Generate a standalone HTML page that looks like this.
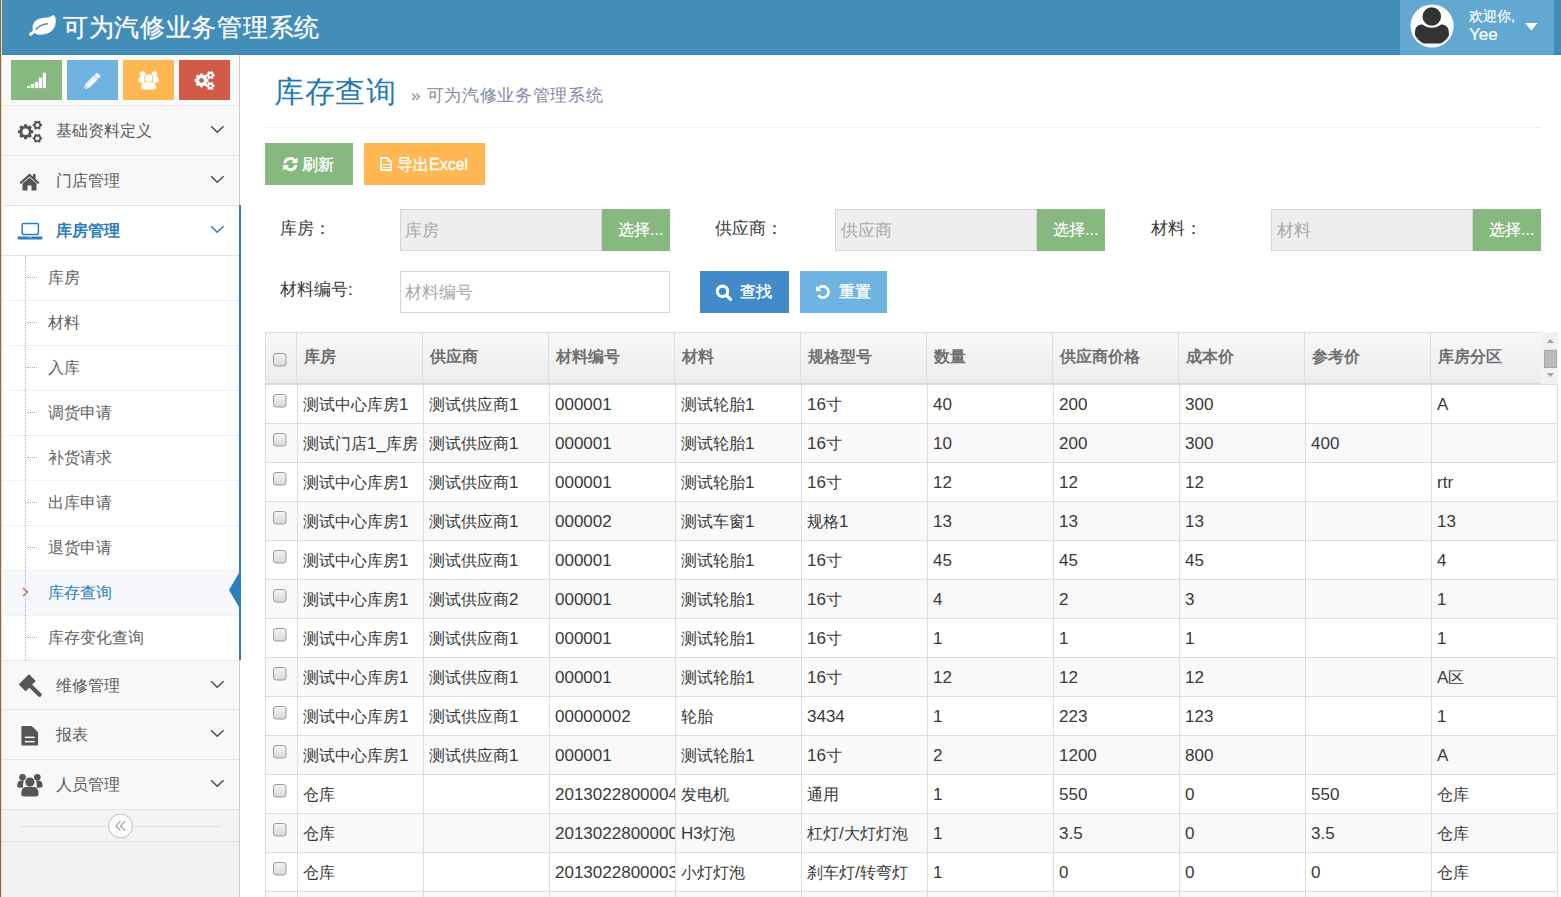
<!DOCTYPE html><html><head><meta charset="utf-8"><title>库存查询</title><style>
*{box-sizing:border-box;margin:0;padding:0}
html,body{width:1561px;height:897px;overflow:hidden;background:#fff;font-family:"Liberation Sans",sans-serif;color:#393939}
div,span,svg{position:absolute}
.nw{white-space:nowrap}
i{font-style:normal;position:static}
</style></head><body>
<div style="left:0px;top:0px;width:1px;height:897px;background:#8e6a35"></div>
<div style="left:1px;top:0px;width:1px;height:897px;background:#e0dcd5"></div>
<div style="left:2px;top:0px;width:1559px;height:54px;background:#438eb9"></div>
<div style="left:2px;top:54px;width:1559px;height:1px;background:#3783b5"></div>
<svg style="left:25px;top:10px" width="36" height="30" viewBox="0 0 36 30"><path d="M8 20.5 C6.2 14.5 10 8.2 19.5 7.8 C23.5 7.6 26 6.6 28.4 5 C31.2 6.2 31.2 12 30.2 15.5 C28.5 21.5 22 25 14.5 24.7 C12 24.6 10.5 23.8 9.3 23 L7 25.3 C6 26.3 4.2 26 4 24.6 C3.8 23.4 4.8 22.7 6.2 21.9 Z" fill="#fff"/><path d="M10.7 19.6 C13.5 16.4 17 13.9 22.8 13.7" stroke="#438eb9" stroke-width="1.5" fill="none"/></svg>
<span class="nw" style="left:63px;top:11px;font-size:25px;line-height:32px;color:#fff;letter-spacing:0.7px;-webkit-text-stroke:0.3px #fff">可为汽修业务管理系统</span>
<div style="left:1400px;top:0px;width:154px;height:54px;background:#62a8d1"></div>
<div style="left:1400px;top:54px;width:154px;height:1px;background:#55a0cd"></div>
<svg style="left:1406px;top:0px" width="52" height="52" viewBox="0 0 52 52"><circle cx="26.1" cy="26" r="21.6" fill="#fff"/><circle cx="26.1" cy="26" r="19.9" fill="none" stroke="#dde9f2" stroke-width="0.7"/><clipPath id="cc"><circle cx="26.1" cy="26" r="19.4"/></clipPath><g clip-path="url(#cc)"><path d="M9 43.5 L9 33 C9 27 12 24.6 16.5 24.6 C19.5 27 22.5 27.8 25.8 27.8 C29 27.8 32 27 35 24.6 C39.5 24.6 42.9 27 42.9 33 L42.9 43.5 Z" fill="#333"/></g><circle cx="25.8" cy="16.5" r="10.4" fill="#fff"/><circle cx="25.8" cy="16.5" r="9.3" fill="#333"/></svg>
<span class="nw" style="left:1469px;top:8px;font-size:14px;line-height:16px;color:#fff;-webkit-text-stroke:0.2px #fff">欢迎你,</span>
<span class="nw" style="left:1469px;top:25px;font-size:17px;line-height:20px;color:#fff;-webkit-text-stroke:0.2px #fff">Yee</span>
<svg style="left:1525px;top:23px" width="13" height="8" viewBox="0 0 13 8"><path d="M0 0 L12.5 0 L6.25 7.5 Z" fill="#fff"/></svg>
<div style="left:2px;top:55px;width:238px;height:842px;background:#f2f2f2;border-right:1px solid #ccc"></div>
<div style="left:2px;top:55px;width:237px;height:50px;background:#fafafa;border-top:1px solid #fff"></div>
<div style="left:11px;top:60px;width:51px;height:40px;background:#87b87f"></div>
<div style="left:67px;top:60px;width:51px;height:40px;background:#6fb3e0"></div>
<div style="left:123px;top:60px;width:51px;height:40px;background:#ffb752"></div>
<div style="left:179px;top:60px;width:51px;height:40px;background:#d15b47"></div>
<svg style="left:22px;top:66px" width="30" height="28" viewBox="0 0 30 28"><g fill="#fff"><rect x="4.95" y="19.9" width="3.2" height="2.2"/><rect x="8.9" y="18" width="3.2" height="4.1"/><rect x="12.9" y="15.9" width="3.2" height="6.2"/><rect x="16.75" y="11.6" width="3.2" height="10.5"/><rect x="20.75" y="6.7" width="3.2" height="15.4"/></g></svg>
<svg style="left:80px;top:68px" width="24" height="24" viewBox="0 0 24 24"><g transform="translate(11.9,13.3) rotate(-45) scale(0.94)"><rect x="6.3" y="-2.9" width="4.2" height="5.8" rx="1.2" fill="#fff"/><path d="M-6.2 -2.9 L5.5 -2.9 L5.5 2.9 L-6.2 2.9 L-10.2 1.2 L-10.2 -1.2 Z" fill="#fff"/><path d="M-6.5 -1.2 L5 -1.2" stroke="#6fb3e0" stroke-width="0.6"/><circle cx="-8.3" cy="0" r="0.9" fill="#6fb3e0"/></g></svg>
<svg style="left:132px;top:66px" width="30" height="28" viewBox="0 0 30 28"><g fill="#fff"><circle cx="10.7" cy="8.1" r="2.9"/><circle cx="22.5" cy="8.1" r="2.9"/><circle cx="9.6" cy="13.6" r="3.1"/><circle cx="23.6" cy="13.6" r="3.1"/><path d="M6.5 13.6 L12 12 L12 16.5 L6.5 15.5 Z"/><path d="M26.7 13.6 L21 12 L21 16.5 L26.7 15.5 Z"/></g><circle cx="16.6" cy="12.1" r="4.6" fill="#ffb752"/><g fill="#fff"><circle cx="16.6" cy="12.1" r="3.9"/><path d="M9.4 21.5 C9.2 17.5 11 16.3 13.5 16.3 L19.7 16.3 C22.2 16.3 24 17.5 23.8 21.5 C23.7 23 23 23.6 21.5 23.6 L11.7 23.6 C10.2 23.6 9.5 23 9.4 21.5 Z"/></g></svg>
<svg style="left:186px;top:66px" width="34" height="28" viewBox="0 0 34 28"><polygon points="20.75,12.89 22.36,13.01 22.36,15.79 20.75,15.91 20.28,17.04 21.33,18.27 19.37,20.23 18.14,19.18 17.01,19.65 16.89,21.26 14.11,21.26 13.99,19.65 12.86,19.18 11.63,20.23 9.67,18.27 10.72,17.04 10.25,15.91 8.64,15.79 8.64,13.01 10.25,12.89 10.72,11.76 9.67,10.53 11.63,8.57 12.86,9.62 13.99,9.15 14.11,7.54 16.89,7.54 17.01,9.15 18.14,9.62 19.37,8.57 21.33,10.53 20.28,11.76" fill="#fff"/><circle cx="15.5" cy="14.4" r="5.46" fill="#fff"/><circle cx="15.5" cy="14.4" r="2.4" fill="#d15b47"/><polygon points="27.30,8.11 28.56,8.09 28.56,10.31 27.30,10.29 26.79,11.16 27.44,12.25 25.52,13.35 24.90,12.25 23.90,12.25 23.28,13.35 21.36,12.25 22.01,11.16 21.50,10.29 20.24,10.31 20.24,8.09 21.50,8.11 22.01,7.24 21.36,6.15 23.28,5.05 23.90,6.15 24.90,6.15 25.52,5.05 27.44,6.15 26.79,7.24" fill="#fff"/><circle cx="24.4" cy="9.2" r="3.10" fill="#fff"/><circle cx="24.4" cy="9.2" r="1.2" fill="#d15b47"/><polygon points="27.30,18.81 28.56,18.79 28.56,21.01 27.30,20.99 26.79,21.86 27.44,22.95 25.52,24.05 24.90,22.95 23.90,22.95 23.28,24.05 21.36,22.95 22.01,21.86 21.50,20.99 20.24,21.01 20.24,18.79 21.50,18.81 22.01,17.94 21.36,16.85 23.28,15.75 23.90,16.85 24.90,16.85 25.52,15.75 27.44,16.85 26.79,17.94" fill="#fff"/><circle cx="24.4" cy="19.9" r="3.10" fill="#fff"/><circle cx="24.4" cy="19.9" r="1.2" fill="#d15b47"/></svg>
<div style="left:2px;top:105px;width:237px;height:50px;background:#f8f8f8;border-top:1px solid #e5e5e5"></div>
<span class="nw" style="left:56px;top:120.5px;font-size:16px;line-height:20px;color:#585858;">基础资料定义</span>
<svg style="left:210px;top:125px" width="15" height="9" viewBox="0 0 15 9"><path d="M1.2 1.2 L7.2 7.2 L13.6 1.2" stroke="#4a4a4a" stroke-width="1.5" fill="none"/></svg>
<div style="left:2px;top:155px;width:237px;height:50px;background:#f8f8f8;border-top:1px solid #e5e5e5"></div>
<span class="nw" style="left:56px;top:170.5px;font-size:16px;line-height:20px;color:#585858;">门店管理</span>
<svg style="left:210px;top:175px" width="15" height="9" viewBox="0 0 15 9"><path d="M1.2 1.2 L7.2 7.2 L13.6 1.2" stroke="#4a4a4a" stroke-width="1.5" fill="none"/></svg>
<svg style="left:14px;top:116px" width="32" height="32" viewBox="0 0 32 32"><polygon points="17.31,14.12 19.16,14.25 19.16,17.15 17.31,17.28 16.76,18.62 17.98,20.02 15.92,22.08 14.52,20.86 13.18,21.41 13.05,23.26 10.15,23.26 10.02,21.41 8.68,20.86 7.28,22.08 5.22,20.02 6.44,18.62 5.89,17.28 4.04,17.15 4.04,14.25 5.89,14.12 6.44,12.78 5.22,11.38 7.28,9.32 8.68,10.54 10.02,9.99 10.15,8.14 13.05,8.14 13.18,9.99 14.52,10.54 15.92,9.32 17.98,11.38 16.76,12.78" fill="#555"/><circle cx="11.6" cy="15.7" r="5.93" fill="#555"/><circle cx="11.6" cy="15.7" r="3.2" fill="#f8f8f8"/><polygon points="26.77,7.98 28.09,8.10 28.09,10.10 26.77,10.22 26.05,11.46 26.61,12.67 24.88,13.67 24.12,12.58 22.68,12.58 21.92,13.67 20.19,12.67 20.75,11.46 20.03,10.22 18.71,10.10 18.71,8.10 20.03,7.98 20.75,6.74 20.19,5.53 21.92,4.53 22.68,5.62 24.12,5.62 24.88,4.53 26.61,5.53 26.05,6.74" fill="#555"/><circle cx="23.4" cy="9.1" r="3.55" fill="#555"/><circle cx="23.4" cy="9.1" r="1.9" fill="#f8f8f8"/><polygon points="26.77,21.18 28.09,21.30 28.09,23.30 26.77,23.42 26.05,24.66 26.61,25.87 24.88,26.87 24.12,25.78 22.68,25.78 21.92,26.87 20.19,25.87 20.75,24.66 20.03,23.42 18.71,23.30 18.71,21.30 20.03,21.18 20.75,19.94 20.19,18.73 21.92,17.73 22.68,18.82 24.12,18.82 24.88,17.73 26.61,18.73 26.05,19.94" fill="#555"/><circle cx="23.4" cy="22.3" r="3.55" fill="#555"/><circle cx="23.4" cy="22.3" r="1.9" fill="#f8f8f8"/></svg>
<svg style="left:19px;top:173px" width="21" height="18" viewBox="0 0 21 18"><path d="M10.5 0.5 L0.5 9.5 L2 11 L10.5 3.5 L19 11 L20.5 9.5 L16.5 6 L16.5 1 L14 1 L14 3.8 Z" fill="#555"/><path d="M3.5 10.5 L10.5 4.5 L17.5 10.5 L17.5 17.5 L12.5 17.5 L12.5 12.5 L8.5 12.5 L8.5 17.5 L3.5 17.5 Z" fill="#555"/></svg>
<div style="left:2px;top:205px;width:237px;height:50px;background:#fff;border-top:1px solid #e5e5e5"></div>
<span class="nw" style="left:56px;top:220.5px;font-size:16px;line-height:20px;color:#2b7dbc;font-weight:bold">库房管理</span>
<svg style="left:12px;top:212px" width="36" height="32" viewBox="0 0 36 32"><rect x="10.2" y="11.5" width="16.2" height="11" rx="1.2" fill="none" stroke="#2b7dbc" stroke-width="1.5"/><path d="M5.8 24.6 L30.4 24.6 L30.4 26.2 Q30.4 27.4 29.2 27.4 L7 27.4 Q5.8 27.4 5.8 26.2 Z" fill="#2b7dbc"/><rect x="16.5" y="24.6" width="3.5" height="0.8" fill="#cfe0ee"/></svg>
<svg style="left:210px;top:225px" width="15" height="9" viewBox="0 0 15 9"><path d="M1.2 1.2 L7.2 7.2 L13.6 1.2" stroke="#2b7dbc" stroke-width="1.5" fill="none"/></svg>
<div style="left:239px;top:205px;width:2px;height:455px;background:#2b7dbc"></div>
<div style="left:2px;top:255px;width:237px;height:405px;background:#fff;border-top:1px solid #e5e5e5"></div>
<span class="nw" style="left:48px;top:268px;font-size:16px;line-height:20px;color:#616161;">库房</span>
<div style="left:27px;top:277px;width:10px;height:0;border-top:1px dotted #8fb5d6"></div>
<div style="left:2px;top:300px;width:237px;height:0;border-top:1px dotted #e4e4e4"></div>
<span class="nw" style="left:48px;top:313px;font-size:16px;line-height:20px;color:#616161;">材料</span>
<div style="left:27px;top:322px;width:10px;height:0;border-top:1px dotted #8fb5d6"></div>
<div style="left:2px;top:345px;width:237px;height:0;border-top:1px dotted #e4e4e4"></div>
<span class="nw" style="left:48px;top:358px;font-size:16px;line-height:20px;color:#616161;">入库</span>
<div style="left:27px;top:367px;width:10px;height:0;border-top:1px dotted #8fb5d6"></div>
<div style="left:2px;top:390px;width:237px;height:0;border-top:1px dotted #e4e4e4"></div>
<span class="nw" style="left:48px;top:403px;font-size:16px;line-height:20px;color:#616161;">调货申请</span>
<div style="left:27px;top:412px;width:10px;height:0;border-top:1px dotted #8fb5d6"></div>
<div style="left:2px;top:435px;width:237px;height:0;border-top:1px dotted #e4e4e4"></div>
<span class="nw" style="left:48px;top:448px;font-size:16px;line-height:20px;color:#616161;">补货请求</span>
<div style="left:27px;top:457px;width:10px;height:0;border-top:1px dotted #8fb5d6"></div>
<div style="left:2px;top:480px;width:237px;height:0;border-top:1px dotted #e4e4e4"></div>
<span class="nw" style="left:48px;top:493px;font-size:16px;line-height:20px;color:#616161;">出库申请</span>
<div style="left:27px;top:502px;width:10px;height:0;border-top:1px dotted #8fb5d6"></div>
<div style="left:2px;top:525px;width:237px;height:0;border-top:1px dotted #e4e4e4"></div>
<span class="nw" style="left:48px;top:538px;font-size:16px;line-height:20px;color:#616161;">退货申请</span>
<div style="left:27px;top:547px;width:10px;height:0;border-top:1px dotted #8fb5d6"></div>
<div style="left:2px;top:570px;width:237px;height:0;border-top:1px dotted #e4e4e4"></div>
<div style="left:2px;top:571px;width:237px;height:44px;background:#f5f7fa"></div>
<span class="nw" style="left:48px;top:583px;font-size:16px;line-height:20px;color:#2b7dbc;">库存查询</span>
<svg style="left:22px;top:587px" width="7" height="10" viewBox="0 0 7 10"><path d="M1 1 L5.5 5 L1 9" stroke="#c86139" stroke-width="1.4" fill="none"/></svg>
<svg style="left:229px;top:573px" width="10" height="34" viewBox="0 0 10 34"><path d="M10 0 L0 17 L10 34 Z" fill="#2b7dbc"/></svg>
<div style="left:2px;top:615px;width:237px;height:0;border-top:1px dotted #e4e4e4"></div>
<span class="nw" style="left:48px;top:628px;font-size:16px;line-height:20px;color:#616161;">库存变化查询</span>
<div style="left:27px;top:637px;width:10px;height:0;border-top:1px dotted #8fb5d6"></div>
<div style="left:25px;top:256px;width:0;height:404px;border-left:1px dotted #8fb5d6"></div>
<div style="left:2px;top:660px;width:237px;height:50px;background:#f8f8f8;border-top:1px solid #e5e5e5"></div>
<span class="nw" style="left:56px;top:675.5px;font-size:16px;line-height:20px;color:#585858;">维修管理</span>
<svg style="left:210px;top:680px" width="15" height="9" viewBox="0 0 15 9"><path d="M1.2 1.2 L7.2 7.2 L13.6 1.2" stroke="#4a4a4a" stroke-width="1.5" fill="none"/></svg>
<div style="left:2px;top:709px;width:237px;height:50px;background:#f8f8f8;border-top:1px solid #e5e5e5"></div>
<span class="nw" style="left:56px;top:724.5px;font-size:16px;line-height:20px;color:#585858;">报表</span>
<svg style="left:210px;top:729px" width="15" height="9" viewBox="0 0 15 9"><path d="M1.2 1.2 L7.2 7.2 L13.6 1.2" stroke="#4a4a4a" stroke-width="1.5" fill="none"/></svg>
<div style="left:2px;top:759px;width:237px;height:50px;background:#f8f8f8;border-top:1px solid #e5e5e5"></div>
<span class="nw" style="left:56px;top:774.5px;font-size:16px;line-height:20px;color:#585858;">人员管理</span>
<svg style="left:210px;top:779px" width="15" height="9" viewBox="0 0 15 9"><path d="M1.2 1.2 L7.2 7.2 L13.6 1.2" stroke="#4a4a4a" stroke-width="1.5" fill="none"/></svg>
<svg style="left:10px;top:665px" width="40" height="40" viewBox="0 0 40 40"><g fill="#555"><path d="M9.3 18.8 L18.4 9.7 Q19 9.1 19.6 9.7 L25.3 15.4 Q25.9 16 25.3 16.6 L16.2 25.7 Q15.6 26.3 15 25.7 L9.3 20 Q8.7 19.4 9.3 18.8 Z"/></g><path d="M20.8 21.2 L29.6 29.8" stroke="#555" stroke-width="4.2" stroke-linecap="round"/><path d="M11.5 17 L17.5 23" stroke="#f8f8f8" stroke-width="0"/></svg>
<svg style="left:10px;top:715px" width="40" height="40" viewBox="0 0 40 40"><path d="M12.4 11 L21.6 11 L28.1 17.4 L28.1 29.5 Q28.1 30.5 27.1 30.5 L12.4 30.5 Q11.4 30.5 11.4 29.5 L11.4 12 Q11.4 11 12.4 11 Z" fill="#555"/><path d="M21.9 11 L28.1 17.2 L28.1 11 Z" fill="#f8f8f8"/><path d="M22.6 11.8 L27.3 16.5 L22.6 16.5 Z" fill="#555"/><rect x="14.8" y="21.6" width="9.9" height="1.5" fill="#f8f8f8"/><rect x="14.8" y="25.9" width="9.9" height="1.5" fill="#f8f8f8"/></svg>
<svg style="left:10px;top:765px" width="40" height="40" viewBox="0 0 40 40"><g fill="#555"><circle cx="12.5" cy="12.2" r="3.3"/><circle cx="27.3" cy="12.2" r="3.3"/><path d="M7.2 22 Q7 15.6 11 15.6 L14 15.6 Q12.5 18 13 22.5 Q10 23 7.2 22 Z"/><path d="M32.6 22 Q32.8 15.6 28.8 15.6 L25.8 15.6 Q27.3 18 26.8 22.5 Q29.8 23 32.6 22 Z"/></g><circle cx="19.9" cy="17.1" r="5.3" fill="#f8f8f8"/><g fill="#555"><circle cx="19.9" cy="17.1" r="4.6"/><path d="M11.3 29.3 C11.1 23.5 13.5 21.9 16.5 21.9 L23.3 21.9 C26.3 21.9 28.7 23.5 28.5 29.3 C28.4 30.8 27.6 31.4 26 31.4 L13.8 31.4 C12.2 31.4 11.4 30.8 11.3 29.3 Z"/></g></svg>
<div style="left:2px;top:809px;width:237px;height:33px;background:#f3f3f3;border-top:1px solid #e5e5e5;border-bottom:1px solid #e0e0e0"></div>
<div style="left:21px;top:826px;width:199px;height:1px;background:#e0e0e0"></div>
<svg style="left:108px;top:814px" width="25" height="25" viewBox="0 0 25 25"><circle cx="12.5" cy="11.9" r="11.9" fill="#fff" stroke="#bbb" stroke-width="1"/><path d="M12.4 7.2 L7.9 11.9 L12.4 16.6 M17.1 7.2 L12.6 11.9 L17.1 16.6" stroke="#9a9a9a" stroke-width="1.1" fill="none"/></svg>
<span class="nw" style="left:274px;top:72.5px;font-size:30px;line-height:38px;color:#2679b5;letter-spacing:0.6px">库存查询</span>
<span class="nw" style="left:411px;top:83.5px;font-size:17px;line-height:24px;color:#8089a0;letter-spacing:0.7px">» 可为汽修业务管理系统</span>
<div style="left:265px;top:127px;width:1276px;height:0;border-top:1px dotted #e2e2e2"></div>
<div style="left:265px;top:143px;width:88px;height:42px;background:#87b87f"></div>
<div style="left:364px;top:143px;width:121px;height:42px;background:#ffb752"></div>
<svg style="left:280px;top:153px" width="22" height="22" viewBox="0 0 22 22"><path d="M4.79 10.42 A5.6 5.6 0 0 1 14.94 7.89" stroke="#fff" stroke-width="2.8" fill="none"/><path d="M17.6 4.6 L17.6 10.1 L11.4 10.1 Z" fill="#fff"/><path d="M15.91 11.78 A5.6 5.6 0 0 1 5.76 14.31" stroke="#fff" stroke-width="2.8" fill="none"/><path d="M3.2 12.1 L3.2 17.7 L9 12.1 Z" fill="#fff"/></svg>
<span class="nw" style="left:302px;top:154.5px;font-size:16px;line-height:19px;color:#fff;-webkit-text-stroke:0.35px #fff">刷新</span>
<svg style="left:376px;top:153px" width="22" height="22" viewBox="0 0 22 22"><path d="M5.1 4.8 L11.6 4.8 L15.1 8.3 L15.1 17 L5.1 17 Z" fill="none" stroke="#fff" stroke-width="1.8" stroke-linejoin="round"/><path d="M11.1 5.6 L11.1 8.9 L14.4 8.9 Z" fill="#fff"/><rect x="6.6" y="11" width="7.1" height="1.1" fill="#fff"/><rect x="6.6" y="14" width="7.1" height="1.1" fill="#fff"/></svg>
<span class="nw" style="left:397px;top:154.5px;font-size:16px;line-height:19px;color:#fff;-webkit-text-stroke:0.35px #fff">导出Excel</span>
<span class="nw" style="left:280px;top:217.5px;font-size:17px;line-height:22px;color:#393939;">库房：</span>
<div style="left:400px;top:209px;width:202px;height:42px;background:#eee;border:1px solid #d5d5d5"></div>
<span class="nw" style="left:405px;top:219.5px;font-size:17px;line-height:22px;color:#aaa;">库房</span>
<div style="left:602px;top:209px;width:68px;height:42px;background:#87b87f"></div>
<span class="nw" style="left:618px;top:219px;font-size:16px;line-height:22px;color:#fff;-webkit-text-stroke:0.15px #fff">选择...</span>
<span class="nw" style="left:715px;top:217.5px;font-size:17px;line-height:22px;color:#393939;">供应商：</span>
<div style="left:835px;top:209px;width:202px;height:42px;background:#eee;border:1px solid #d5d5d5"></div>
<span class="nw" style="left:841px;top:219.5px;font-size:17px;line-height:22px;color:#aaa;">供应商</span>
<div style="left:1037px;top:209px;width:68px;height:42px;background:#87b87f"></div>
<span class="nw" style="left:1053px;top:219px;font-size:16px;line-height:22px;color:#fff;-webkit-text-stroke:0.15px #fff">选择...</span>
<span class="nw" style="left:1151px;top:217.5px;font-size:17px;line-height:22px;color:#393939;">材料：</span>
<div style="left:1271px;top:209px;width:202px;height:42px;background:#eee;border:1px solid #d5d5d5"></div>
<span class="nw" style="left:1277px;top:219.5px;font-size:17px;line-height:22px;color:#aaa;">材料</span>
<div style="left:1473px;top:209px;width:68px;height:42px;background:#87b87f"></div>
<span class="nw" style="left:1489px;top:219px;font-size:16px;line-height:22px;color:#fff;-webkit-text-stroke:0.15px #fff">选择...</span>
<span class="nw" style="left:280px;top:278.5px;font-size:17px;line-height:22px;color:#393939;">材料编号:</span>
<div style="left:400px;top:271px;width:270px;height:42px;background:#fff;border:1px solid #d5d5d5"></div>
<span class="nw" style="left:405px;top:282px;font-size:17px;line-height:22px;color:#aaa;">材料编号</span>
<div style="left:700px;top:271px;width:89px;height:42px;background:#428bca"></div>
<svg style="left:710px;top:280px" width="26" height="26" viewBox="0 0 26 26"><circle cx="12.5" cy="11.3" r="5.2" stroke="#fff" stroke-width="3.1" fill="none"/><path d="M17 15.8 L20.6 19.4" stroke="#fff" stroke-width="3.2" stroke-linecap="round"/></svg>
<span class="nw" style="left:740px;top:282px;font-size:16px;line-height:20px;color:#fff;-webkit-text-stroke:0.35px #fff">查找</span>
<div style="left:800px;top:271px;width:87px;height:42px;background:#6fb3e0"></div>
<svg style="left:810px;top:280px" width="26" height="26" viewBox="0 0 26 26"><path d="M8.98 8.08 A5.55 5.55 0 1 1 8.35 15.18" stroke="#fff" stroke-width="2.7" fill="none"/><path d="M5.9 5.6 L5.9 11 L11.4 11 Z" fill="#fff"/></svg>
<span class="nw" style="left:839px;top:282px;font-size:16px;line-height:20px;color:#fff;-webkit-text-stroke:0.35px #fff">重置</span>
<div style="left:265px;top:332px;width:1276px;height:52px;background:linear-gradient(#f8f8f8,#ececec);border:1px solid #ddd;border-right:none"></div>
<div style="left:296px;top:332px;width:1px;height:52px;background:#ddd"></div>
<div style="left:422px;top:332px;width:1px;height:52px;background:#ddd"></div>
<div style="left:548px;top:332px;width:1px;height:52px;background:#ddd"></div>
<div style="left:674px;top:332px;width:1px;height:52px;background:#ddd"></div>
<div style="left:800px;top:332px;width:1px;height:52px;background:#ddd"></div>
<div style="left:926px;top:332px;width:1px;height:52px;background:#ddd"></div>
<div style="left:1052px;top:332px;width:1px;height:52px;background:#ddd"></div>
<div style="left:1178px;top:332px;width:1px;height:52px;background:#ddd"></div>
<div style="left:1304px;top:332px;width:1px;height:52px;background:#ddd"></div>
<div style="left:1430px;top:332px;width:1px;height:52px;background:#ddd"></div>
<span class="nw" style="left:304px;top:347px;font-size:16px;line-height:20px;color:#707070;font-weight:bold">库房</span>
<span class="nw" style="left:430px;top:347px;font-size:16px;line-height:20px;color:#707070;font-weight:bold">供应商</span>
<span class="nw" style="left:556px;top:347px;font-size:16px;line-height:20px;color:#707070;font-weight:bold">材料编号</span>
<span class="nw" style="left:682px;top:347px;font-size:16px;line-height:20px;color:#707070;font-weight:bold">材料</span>
<span class="nw" style="left:808px;top:347px;font-size:16px;line-height:20px;color:#707070;font-weight:bold">规格型号</span>
<span class="nw" style="left:934px;top:347px;font-size:16px;line-height:20px;color:#707070;font-weight:bold">数量</span>
<span class="nw" style="left:1060px;top:347px;font-size:16px;line-height:20px;color:#707070;font-weight:bold">供应商价格</span>
<span class="nw" style="left:1186px;top:347px;font-size:16px;line-height:20px;color:#707070;font-weight:bold">成本价</span>
<span class="nw" style="left:1312px;top:347px;font-size:16px;line-height:20px;color:#707070;font-weight:bold">参考价</span>
<span class="nw" style="left:1438px;top:347px;font-size:16px;line-height:20px;color:#707070;font-weight:bold">库房分区</span>
<svg style="left:273px;top:353px" width="14" height="14" viewBox="0 0 14 14"><defs><linearGradient id="g" x1="0" y1="0" x2="0" y2="1"><stop offset="0" stop-color="#f4f4f4"/><stop offset="1" stop-color="#d8d8d8"/></linearGradient></defs><rect x="0.5" y="0.5" width="12.5" height="12.5" rx="2.5" fill="url(#g)" stroke="#9a9a9a" stroke-width="1"/></svg>
<div style="left:1541px;top:332px;width:17px;height:52px;background:#f1f1f1"></div>
<svg style="left:1541px;top:332px" width="17" height="52" viewBox="0 0 17 52"><path d="M5.8 11 L9.4 6.9 L13 11 Z" fill="#a3a3a3"/><rect x="3.5" y="18.3" width="12" height="17.2" fill="#bcbcbc" stroke="#a8a8a8" stroke-width="1"/><path d="M5.8 41 L9.4 45 L13 41 Z" fill="#a3a3a3"/></svg>
<div style="left:265px;top:384px;width:1293px;height:39px;background:#fff"></div>
<div style="left:265px;top:423px;width:1293px;height:39px;background:#f9f9f9"></div>
<div style="left:265px;top:462px;width:1293px;height:39px;background:#fff"></div>
<div style="left:265px;top:501px;width:1293px;height:39px;background:#f9f9f9"></div>
<div style="left:265px;top:540px;width:1293px;height:39px;background:#fff"></div>
<div style="left:265px;top:579px;width:1293px;height:39px;background:#f9f9f9"></div>
<div style="left:265px;top:618px;width:1293px;height:39px;background:#fff"></div>
<div style="left:265px;top:657px;width:1293px;height:39px;background:#f9f9f9"></div>
<div style="left:265px;top:696px;width:1293px;height:39px;background:#fff"></div>
<div style="left:265px;top:735px;width:1293px;height:39px;background:#f9f9f9"></div>
<div style="left:265px;top:774px;width:1293px;height:39px;background:#fff"></div>
<div style="left:265px;top:813px;width:1293px;height:39px;background:#f9f9f9"></div>
<div style="left:265px;top:852px;width:1293px;height:39px;background:#fff"></div>
<div style="left:265px;top:891px;width:1293px;height:39px;background:#f9f9f9"></div>
<div style="left:265px;top:384px;width:1293px;height:1px;background:#ddd"></div>
<div style="left:265px;top:423px;width:1293px;height:1px;background:#ddd"></div>
<div style="left:265px;top:462px;width:1293px;height:1px;background:#ddd"></div>
<div style="left:265px;top:501px;width:1293px;height:1px;background:#ddd"></div>
<div style="left:265px;top:540px;width:1293px;height:1px;background:#ddd"></div>
<div style="left:265px;top:579px;width:1293px;height:1px;background:#ddd"></div>
<div style="left:265px;top:618px;width:1293px;height:1px;background:#ddd"></div>
<div style="left:265px;top:657px;width:1293px;height:1px;background:#ddd"></div>
<div style="left:265px;top:696px;width:1293px;height:1px;background:#ddd"></div>
<div style="left:265px;top:735px;width:1293px;height:1px;background:#ddd"></div>
<div style="left:265px;top:774px;width:1293px;height:1px;background:#ddd"></div>
<div style="left:265px;top:813px;width:1293px;height:1px;background:#ddd"></div>
<div style="left:265px;top:852px;width:1293px;height:1px;background:#ddd"></div>
<div style="left:265px;top:891px;width:1293px;height:1px;background:#ddd"></div>
<div style="left:265px;top:384px;width:1px;height:513px;background:#ddd"></div>
<div style="left:297px;top:384px;width:1px;height:513px;background:#ddd"></div>
<div style="left:423px;top:384px;width:1px;height:513px;background:#ddd"></div>
<div style="left:549px;top:384px;width:1px;height:513px;background:#ddd"></div>
<div style="left:675px;top:384px;width:1px;height:513px;background:#ddd"></div>
<div style="left:801px;top:384px;width:1px;height:513px;background:#ddd"></div>
<div style="left:927px;top:384px;width:1px;height:513px;background:#ddd"></div>
<div style="left:1053px;top:384px;width:1px;height:513px;background:#ddd"></div>
<div style="left:1179px;top:384px;width:1px;height:513px;background:#ddd"></div>
<div style="left:1305px;top:384px;width:1px;height:513px;background:#ddd"></div>
<div style="left:1431px;top:384px;width:1px;height:513px;background:#ddd"></div>
<div style="left:1557px;top:384px;width:1px;height:513px;background:#ddd"></div>
<svg style="left:273px;top:394px" width="14" height="14" viewBox="0 0 14 14"><defs><linearGradient id="g" x1="0" y1="0" x2="0" y2="1"><stop offset="0" stop-color="#f4f4f4"/><stop offset="1" stop-color="#d8d8d8"/></linearGradient></defs><rect x="0.5" y="0.5" width="12.5" height="12.5" rx="2.5" fill="url(#g)" stroke="#9a9a9a" stroke-width="1"/></svg>
<div style="left:298px;top:385px;width:125px;height:38px;overflow:hidden"><span class="nw" style="left:5px;top:10px;font-size:16px;line-height:20px;color:#393939">测试中心库房<i style="font-size:17.00px">1</i></span></div>
<div style="left:424px;top:385px;width:125px;height:38px;overflow:hidden"><span class="nw" style="left:5px;top:10px;font-size:16px;line-height:20px;color:#393939">测试供应商<i style="font-size:17.00px">1</i></span></div>
<div style="left:550px;top:385px;width:125px;height:38px;overflow:hidden"><span class="nw" style="left:5px;top:10px;font-size:16px;line-height:20px;color:#393939"><i style="font-size:17.00px">000001</i></span></div>
<div style="left:676px;top:385px;width:125px;height:38px;overflow:hidden"><span class="nw" style="left:5px;top:10px;font-size:16px;line-height:20px;color:#393939">测试轮胎<i style="font-size:17.00px">1</i></span></div>
<div style="left:802px;top:385px;width:125px;height:38px;overflow:hidden"><span class="nw" style="left:5px;top:10px;font-size:16px;line-height:20px;color:#393939"><i style="font-size:17.00px">16</i>寸</span></div>
<div style="left:928px;top:385px;width:125px;height:38px;overflow:hidden"><span class="nw" style="left:5px;top:10px;font-size:16px;line-height:20px;color:#393939"><i style="font-size:17.00px">40</i></span></div>
<div style="left:1054px;top:385px;width:125px;height:38px;overflow:hidden"><span class="nw" style="left:5px;top:10px;font-size:16px;line-height:20px;color:#393939"><i style="font-size:17.00px">200</i></span></div>
<div style="left:1180px;top:385px;width:125px;height:38px;overflow:hidden"><span class="nw" style="left:5px;top:10px;font-size:16px;line-height:20px;color:#393939"><i style="font-size:17.00px">300</i></span></div>
<div style="left:1432px;top:385px;width:125px;height:38px;overflow:hidden"><span class="nw" style="left:5px;top:10px;font-size:16px;line-height:20px;color:#393939"><i style="font-size:17.00px">A</i></span></div>
<svg style="left:273px;top:433px" width="14" height="14" viewBox="0 0 14 14"><defs><linearGradient id="g" x1="0" y1="0" x2="0" y2="1"><stop offset="0" stop-color="#f4f4f4"/><stop offset="1" stop-color="#d8d8d8"/></linearGradient></defs><rect x="0.5" y="0.5" width="12.5" height="12.5" rx="2.5" fill="url(#g)" stroke="#9a9a9a" stroke-width="1"/></svg>
<div style="left:298px;top:424px;width:125px;height:38px;overflow:hidden"><span class="nw" style="left:5px;top:10px;font-size:16px;line-height:20px;color:#393939">测试门店<i style="font-size:17.00px">1_</i>库房</span></div>
<div style="left:424px;top:424px;width:125px;height:38px;overflow:hidden"><span class="nw" style="left:5px;top:10px;font-size:16px;line-height:20px;color:#393939">测试供应商<i style="font-size:17.00px">1</i></span></div>
<div style="left:550px;top:424px;width:125px;height:38px;overflow:hidden"><span class="nw" style="left:5px;top:10px;font-size:16px;line-height:20px;color:#393939"><i style="font-size:17.00px">000001</i></span></div>
<div style="left:676px;top:424px;width:125px;height:38px;overflow:hidden"><span class="nw" style="left:5px;top:10px;font-size:16px;line-height:20px;color:#393939">测试轮胎<i style="font-size:17.00px">1</i></span></div>
<div style="left:802px;top:424px;width:125px;height:38px;overflow:hidden"><span class="nw" style="left:5px;top:10px;font-size:16px;line-height:20px;color:#393939"><i style="font-size:17.00px">16</i>寸</span></div>
<div style="left:928px;top:424px;width:125px;height:38px;overflow:hidden"><span class="nw" style="left:5px;top:10px;font-size:16px;line-height:20px;color:#393939"><i style="font-size:17.00px">10</i></span></div>
<div style="left:1054px;top:424px;width:125px;height:38px;overflow:hidden"><span class="nw" style="left:5px;top:10px;font-size:16px;line-height:20px;color:#393939"><i style="font-size:17.00px">200</i></span></div>
<div style="left:1180px;top:424px;width:125px;height:38px;overflow:hidden"><span class="nw" style="left:5px;top:10px;font-size:16px;line-height:20px;color:#393939"><i style="font-size:17.00px">300</i></span></div>
<div style="left:1306px;top:424px;width:125px;height:38px;overflow:hidden"><span class="nw" style="left:5px;top:10px;font-size:16px;line-height:20px;color:#393939"><i style="font-size:17.00px">400</i></span></div>
<svg style="left:273px;top:472px" width="14" height="14" viewBox="0 0 14 14"><defs><linearGradient id="g" x1="0" y1="0" x2="0" y2="1"><stop offset="0" stop-color="#f4f4f4"/><stop offset="1" stop-color="#d8d8d8"/></linearGradient></defs><rect x="0.5" y="0.5" width="12.5" height="12.5" rx="2.5" fill="url(#g)" stroke="#9a9a9a" stroke-width="1"/></svg>
<div style="left:298px;top:463px;width:125px;height:38px;overflow:hidden"><span class="nw" style="left:5px;top:10px;font-size:16px;line-height:20px;color:#393939">测试中心库房<i style="font-size:17.00px">1</i></span></div>
<div style="left:424px;top:463px;width:125px;height:38px;overflow:hidden"><span class="nw" style="left:5px;top:10px;font-size:16px;line-height:20px;color:#393939">测试供应商<i style="font-size:17.00px">1</i></span></div>
<div style="left:550px;top:463px;width:125px;height:38px;overflow:hidden"><span class="nw" style="left:5px;top:10px;font-size:16px;line-height:20px;color:#393939"><i style="font-size:17.00px">000001</i></span></div>
<div style="left:676px;top:463px;width:125px;height:38px;overflow:hidden"><span class="nw" style="left:5px;top:10px;font-size:16px;line-height:20px;color:#393939">测试轮胎<i style="font-size:17.00px">1</i></span></div>
<div style="left:802px;top:463px;width:125px;height:38px;overflow:hidden"><span class="nw" style="left:5px;top:10px;font-size:16px;line-height:20px;color:#393939"><i style="font-size:17.00px">16</i>寸</span></div>
<div style="left:928px;top:463px;width:125px;height:38px;overflow:hidden"><span class="nw" style="left:5px;top:10px;font-size:16px;line-height:20px;color:#393939"><i style="font-size:17.00px">12</i></span></div>
<div style="left:1054px;top:463px;width:125px;height:38px;overflow:hidden"><span class="nw" style="left:5px;top:10px;font-size:16px;line-height:20px;color:#393939"><i style="font-size:17.00px">12</i></span></div>
<div style="left:1180px;top:463px;width:125px;height:38px;overflow:hidden"><span class="nw" style="left:5px;top:10px;font-size:16px;line-height:20px;color:#393939"><i style="font-size:17.00px">12</i></span></div>
<div style="left:1432px;top:463px;width:125px;height:38px;overflow:hidden"><span class="nw" style="left:5px;top:10px;font-size:16px;line-height:20px;color:#393939"><i style="font-size:17.00px">rtr</i></span></div>
<svg style="left:273px;top:511px" width="14" height="14" viewBox="0 0 14 14"><defs><linearGradient id="g" x1="0" y1="0" x2="0" y2="1"><stop offset="0" stop-color="#f4f4f4"/><stop offset="1" stop-color="#d8d8d8"/></linearGradient></defs><rect x="0.5" y="0.5" width="12.5" height="12.5" rx="2.5" fill="url(#g)" stroke="#9a9a9a" stroke-width="1"/></svg>
<div style="left:298px;top:502px;width:125px;height:38px;overflow:hidden"><span class="nw" style="left:5px;top:10px;font-size:16px;line-height:20px;color:#393939">测试中心库房<i style="font-size:17.00px">1</i></span></div>
<div style="left:424px;top:502px;width:125px;height:38px;overflow:hidden"><span class="nw" style="left:5px;top:10px;font-size:16px;line-height:20px;color:#393939">测试供应商<i style="font-size:17.00px">1</i></span></div>
<div style="left:550px;top:502px;width:125px;height:38px;overflow:hidden"><span class="nw" style="left:5px;top:10px;font-size:16px;line-height:20px;color:#393939"><i style="font-size:17.00px">000002</i></span></div>
<div style="left:676px;top:502px;width:125px;height:38px;overflow:hidden"><span class="nw" style="left:5px;top:10px;font-size:16px;line-height:20px;color:#393939">测试车窗<i style="font-size:17.00px">1</i></span></div>
<div style="left:802px;top:502px;width:125px;height:38px;overflow:hidden"><span class="nw" style="left:5px;top:10px;font-size:16px;line-height:20px;color:#393939">规格<i style="font-size:17.00px">1</i></span></div>
<div style="left:928px;top:502px;width:125px;height:38px;overflow:hidden"><span class="nw" style="left:5px;top:10px;font-size:16px;line-height:20px;color:#393939"><i style="font-size:17.00px">13</i></span></div>
<div style="left:1054px;top:502px;width:125px;height:38px;overflow:hidden"><span class="nw" style="left:5px;top:10px;font-size:16px;line-height:20px;color:#393939"><i style="font-size:17.00px">13</i></span></div>
<div style="left:1180px;top:502px;width:125px;height:38px;overflow:hidden"><span class="nw" style="left:5px;top:10px;font-size:16px;line-height:20px;color:#393939"><i style="font-size:17.00px">13</i></span></div>
<div style="left:1432px;top:502px;width:125px;height:38px;overflow:hidden"><span class="nw" style="left:5px;top:10px;font-size:16px;line-height:20px;color:#393939"><i style="font-size:17.00px">13</i></span></div>
<svg style="left:273px;top:550px" width="14" height="14" viewBox="0 0 14 14"><defs><linearGradient id="g" x1="0" y1="0" x2="0" y2="1"><stop offset="0" stop-color="#f4f4f4"/><stop offset="1" stop-color="#d8d8d8"/></linearGradient></defs><rect x="0.5" y="0.5" width="12.5" height="12.5" rx="2.5" fill="url(#g)" stroke="#9a9a9a" stroke-width="1"/></svg>
<div style="left:298px;top:541px;width:125px;height:38px;overflow:hidden"><span class="nw" style="left:5px;top:10px;font-size:16px;line-height:20px;color:#393939">测试中心库房<i style="font-size:17.00px">1</i></span></div>
<div style="left:424px;top:541px;width:125px;height:38px;overflow:hidden"><span class="nw" style="left:5px;top:10px;font-size:16px;line-height:20px;color:#393939">测试供应商<i style="font-size:17.00px">1</i></span></div>
<div style="left:550px;top:541px;width:125px;height:38px;overflow:hidden"><span class="nw" style="left:5px;top:10px;font-size:16px;line-height:20px;color:#393939"><i style="font-size:17.00px">000001</i></span></div>
<div style="left:676px;top:541px;width:125px;height:38px;overflow:hidden"><span class="nw" style="left:5px;top:10px;font-size:16px;line-height:20px;color:#393939">测试轮胎<i style="font-size:17.00px">1</i></span></div>
<div style="left:802px;top:541px;width:125px;height:38px;overflow:hidden"><span class="nw" style="left:5px;top:10px;font-size:16px;line-height:20px;color:#393939"><i style="font-size:17.00px">16</i>寸</span></div>
<div style="left:928px;top:541px;width:125px;height:38px;overflow:hidden"><span class="nw" style="left:5px;top:10px;font-size:16px;line-height:20px;color:#393939"><i style="font-size:17.00px">45</i></span></div>
<div style="left:1054px;top:541px;width:125px;height:38px;overflow:hidden"><span class="nw" style="left:5px;top:10px;font-size:16px;line-height:20px;color:#393939"><i style="font-size:17.00px">45</i></span></div>
<div style="left:1180px;top:541px;width:125px;height:38px;overflow:hidden"><span class="nw" style="left:5px;top:10px;font-size:16px;line-height:20px;color:#393939"><i style="font-size:17.00px">45</i></span></div>
<div style="left:1432px;top:541px;width:125px;height:38px;overflow:hidden"><span class="nw" style="left:5px;top:10px;font-size:16px;line-height:20px;color:#393939"><i style="font-size:17.00px">4</i></span></div>
<svg style="left:273px;top:589px" width="14" height="14" viewBox="0 0 14 14"><defs><linearGradient id="g" x1="0" y1="0" x2="0" y2="1"><stop offset="0" stop-color="#f4f4f4"/><stop offset="1" stop-color="#d8d8d8"/></linearGradient></defs><rect x="0.5" y="0.5" width="12.5" height="12.5" rx="2.5" fill="url(#g)" stroke="#9a9a9a" stroke-width="1"/></svg>
<div style="left:298px;top:580px;width:125px;height:38px;overflow:hidden"><span class="nw" style="left:5px;top:10px;font-size:16px;line-height:20px;color:#393939">测试中心库房<i style="font-size:17.00px">1</i></span></div>
<div style="left:424px;top:580px;width:125px;height:38px;overflow:hidden"><span class="nw" style="left:5px;top:10px;font-size:16px;line-height:20px;color:#393939">测试供应商<i style="font-size:17.00px">2</i></span></div>
<div style="left:550px;top:580px;width:125px;height:38px;overflow:hidden"><span class="nw" style="left:5px;top:10px;font-size:16px;line-height:20px;color:#393939"><i style="font-size:17.00px">000001</i></span></div>
<div style="left:676px;top:580px;width:125px;height:38px;overflow:hidden"><span class="nw" style="left:5px;top:10px;font-size:16px;line-height:20px;color:#393939">测试轮胎<i style="font-size:17.00px">1</i></span></div>
<div style="left:802px;top:580px;width:125px;height:38px;overflow:hidden"><span class="nw" style="left:5px;top:10px;font-size:16px;line-height:20px;color:#393939"><i style="font-size:17.00px">16</i>寸</span></div>
<div style="left:928px;top:580px;width:125px;height:38px;overflow:hidden"><span class="nw" style="left:5px;top:10px;font-size:16px;line-height:20px;color:#393939"><i style="font-size:17.00px">4</i></span></div>
<div style="left:1054px;top:580px;width:125px;height:38px;overflow:hidden"><span class="nw" style="left:5px;top:10px;font-size:16px;line-height:20px;color:#393939"><i style="font-size:17.00px">2</i></span></div>
<div style="left:1180px;top:580px;width:125px;height:38px;overflow:hidden"><span class="nw" style="left:5px;top:10px;font-size:16px;line-height:20px;color:#393939"><i style="font-size:17.00px">3</i></span></div>
<div style="left:1432px;top:580px;width:125px;height:38px;overflow:hidden"><span class="nw" style="left:5px;top:10px;font-size:16px;line-height:20px;color:#393939"><i style="font-size:17.00px">1</i></span></div>
<svg style="left:273px;top:628px" width="14" height="14" viewBox="0 0 14 14"><defs><linearGradient id="g" x1="0" y1="0" x2="0" y2="1"><stop offset="0" stop-color="#f4f4f4"/><stop offset="1" stop-color="#d8d8d8"/></linearGradient></defs><rect x="0.5" y="0.5" width="12.5" height="12.5" rx="2.5" fill="url(#g)" stroke="#9a9a9a" stroke-width="1"/></svg>
<div style="left:298px;top:619px;width:125px;height:38px;overflow:hidden"><span class="nw" style="left:5px;top:10px;font-size:16px;line-height:20px;color:#393939">测试中心库房<i style="font-size:17.00px">1</i></span></div>
<div style="left:424px;top:619px;width:125px;height:38px;overflow:hidden"><span class="nw" style="left:5px;top:10px;font-size:16px;line-height:20px;color:#393939">测试供应商<i style="font-size:17.00px">1</i></span></div>
<div style="left:550px;top:619px;width:125px;height:38px;overflow:hidden"><span class="nw" style="left:5px;top:10px;font-size:16px;line-height:20px;color:#393939"><i style="font-size:17.00px">000001</i></span></div>
<div style="left:676px;top:619px;width:125px;height:38px;overflow:hidden"><span class="nw" style="left:5px;top:10px;font-size:16px;line-height:20px;color:#393939">测试轮胎<i style="font-size:17.00px">1</i></span></div>
<div style="left:802px;top:619px;width:125px;height:38px;overflow:hidden"><span class="nw" style="left:5px;top:10px;font-size:16px;line-height:20px;color:#393939"><i style="font-size:17.00px">16</i>寸</span></div>
<div style="left:928px;top:619px;width:125px;height:38px;overflow:hidden"><span class="nw" style="left:5px;top:10px;font-size:16px;line-height:20px;color:#393939"><i style="font-size:17.00px">1</i></span></div>
<div style="left:1054px;top:619px;width:125px;height:38px;overflow:hidden"><span class="nw" style="left:5px;top:10px;font-size:16px;line-height:20px;color:#393939"><i style="font-size:17.00px">1</i></span></div>
<div style="left:1180px;top:619px;width:125px;height:38px;overflow:hidden"><span class="nw" style="left:5px;top:10px;font-size:16px;line-height:20px;color:#393939"><i style="font-size:17.00px">1</i></span></div>
<div style="left:1432px;top:619px;width:125px;height:38px;overflow:hidden"><span class="nw" style="left:5px;top:10px;font-size:16px;line-height:20px;color:#393939"><i style="font-size:17.00px">1</i></span></div>
<svg style="left:273px;top:667px" width="14" height="14" viewBox="0 0 14 14"><defs><linearGradient id="g" x1="0" y1="0" x2="0" y2="1"><stop offset="0" stop-color="#f4f4f4"/><stop offset="1" stop-color="#d8d8d8"/></linearGradient></defs><rect x="0.5" y="0.5" width="12.5" height="12.5" rx="2.5" fill="url(#g)" stroke="#9a9a9a" stroke-width="1"/></svg>
<div style="left:298px;top:658px;width:125px;height:38px;overflow:hidden"><span class="nw" style="left:5px;top:10px;font-size:16px;line-height:20px;color:#393939">测试中心库房<i style="font-size:17.00px">1</i></span></div>
<div style="left:424px;top:658px;width:125px;height:38px;overflow:hidden"><span class="nw" style="left:5px;top:10px;font-size:16px;line-height:20px;color:#393939">测试供应商<i style="font-size:17.00px">1</i></span></div>
<div style="left:550px;top:658px;width:125px;height:38px;overflow:hidden"><span class="nw" style="left:5px;top:10px;font-size:16px;line-height:20px;color:#393939"><i style="font-size:17.00px">000001</i></span></div>
<div style="left:676px;top:658px;width:125px;height:38px;overflow:hidden"><span class="nw" style="left:5px;top:10px;font-size:16px;line-height:20px;color:#393939">测试轮胎<i style="font-size:17.00px">1</i></span></div>
<div style="left:802px;top:658px;width:125px;height:38px;overflow:hidden"><span class="nw" style="left:5px;top:10px;font-size:16px;line-height:20px;color:#393939"><i style="font-size:17.00px">16</i>寸</span></div>
<div style="left:928px;top:658px;width:125px;height:38px;overflow:hidden"><span class="nw" style="left:5px;top:10px;font-size:16px;line-height:20px;color:#393939"><i style="font-size:17.00px">12</i></span></div>
<div style="left:1054px;top:658px;width:125px;height:38px;overflow:hidden"><span class="nw" style="left:5px;top:10px;font-size:16px;line-height:20px;color:#393939"><i style="font-size:17.00px">12</i></span></div>
<div style="left:1180px;top:658px;width:125px;height:38px;overflow:hidden"><span class="nw" style="left:5px;top:10px;font-size:16px;line-height:20px;color:#393939"><i style="font-size:17.00px">12</i></span></div>
<div style="left:1432px;top:658px;width:125px;height:38px;overflow:hidden"><span class="nw" style="left:5px;top:10px;font-size:16px;line-height:20px;color:#393939"><i style="font-size:17.00px">A</i>区</span></div>
<svg style="left:273px;top:706px" width="14" height="14" viewBox="0 0 14 14"><defs><linearGradient id="g" x1="0" y1="0" x2="0" y2="1"><stop offset="0" stop-color="#f4f4f4"/><stop offset="1" stop-color="#d8d8d8"/></linearGradient></defs><rect x="0.5" y="0.5" width="12.5" height="12.5" rx="2.5" fill="url(#g)" stroke="#9a9a9a" stroke-width="1"/></svg>
<div style="left:298px;top:697px;width:125px;height:38px;overflow:hidden"><span class="nw" style="left:5px;top:10px;font-size:16px;line-height:20px;color:#393939">测试中心库房<i style="font-size:17.00px">1</i></span></div>
<div style="left:424px;top:697px;width:125px;height:38px;overflow:hidden"><span class="nw" style="left:5px;top:10px;font-size:16px;line-height:20px;color:#393939">测试供应商<i style="font-size:17.00px">1</i></span></div>
<div style="left:550px;top:697px;width:125px;height:38px;overflow:hidden"><span class="nw" style="left:5px;top:10px;font-size:16px;line-height:20px;color:#393939"><i style="font-size:17.00px">00000002</i></span></div>
<div style="left:676px;top:697px;width:125px;height:38px;overflow:hidden"><span class="nw" style="left:5px;top:10px;font-size:16px;line-height:20px;color:#393939">轮胎</span></div>
<div style="left:802px;top:697px;width:125px;height:38px;overflow:hidden"><span class="nw" style="left:5px;top:10px;font-size:16px;line-height:20px;color:#393939"><i style="font-size:17.00px">3434</i></span></div>
<div style="left:928px;top:697px;width:125px;height:38px;overflow:hidden"><span class="nw" style="left:5px;top:10px;font-size:16px;line-height:20px;color:#393939"><i style="font-size:17.00px">1</i></span></div>
<div style="left:1054px;top:697px;width:125px;height:38px;overflow:hidden"><span class="nw" style="left:5px;top:10px;font-size:16px;line-height:20px;color:#393939"><i style="font-size:17.00px">223</i></span></div>
<div style="left:1180px;top:697px;width:125px;height:38px;overflow:hidden"><span class="nw" style="left:5px;top:10px;font-size:16px;line-height:20px;color:#393939"><i style="font-size:17.00px">123</i></span></div>
<div style="left:1432px;top:697px;width:125px;height:38px;overflow:hidden"><span class="nw" style="left:5px;top:10px;font-size:16px;line-height:20px;color:#393939"><i style="font-size:17.00px">1</i></span></div>
<svg style="left:273px;top:745px" width="14" height="14" viewBox="0 0 14 14"><defs><linearGradient id="g" x1="0" y1="0" x2="0" y2="1"><stop offset="0" stop-color="#f4f4f4"/><stop offset="1" stop-color="#d8d8d8"/></linearGradient></defs><rect x="0.5" y="0.5" width="12.5" height="12.5" rx="2.5" fill="url(#g)" stroke="#9a9a9a" stroke-width="1"/></svg>
<div style="left:298px;top:736px;width:125px;height:38px;overflow:hidden"><span class="nw" style="left:5px;top:10px;font-size:16px;line-height:20px;color:#393939">测试中心库房<i style="font-size:17.00px">1</i></span></div>
<div style="left:424px;top:736px;width:125px;height:38px;overflow:hidden"><span class="nw" style="left:5px;top:10px;font-size:16px;line-height:20px;color:#393939">测试供应商<i style="font-size:17.00px">1</i></span></div>
<div style="left:550px;top:736px;width:125px;height:38px;overflow:hidden"><span class="nw" style="left:5px;top:10px;font-size:16px;line-height:20px;color:#393939"><i style="font-size:17.00px">000001</i></span></div>
<div style="left:676px;top:736px;width:125px;height:38px;overflow:hidden"><span class="nw" style="left:5px;top:10px;font-size:16px;line-height:20px;color:#393939">测试轮胎<i style="font-size:17.00px">1</i></span></div>
<div style="left:802px;top:736px;width:125px;height:38px;overflow:hidden"><span class="nw" style="left:5px;top:10px;font-size:16px;line-height:20px;color:#393939"><i style="font-size:17.00px">16</i>寸</span></div>
<div style="left:928px;top:736px;width:125px;height:38px;overflow:hidden"><span class="nw" style="left:5px;top:10px;font-size:16px;line-height:20px;color:#393939"><i style="font-size:17.00px">2</i></span></div>
<div style="left:1054px;top:736px;width:125px;height:38px;overflow:hidden"><span class="nw" style="left:5px;top:10px;font-size:16px;line-height:20px;color:#393939"><i style="font-size:17.00px">1200</i></span></div>
<div style="left:1180px;top:736px;width:125px;height:38px;overflow:hidden"><span class="nw" style="left:5px;top:10px;font-size:16px;line-height:20px;color:#393939"><i style="font-size:17.00px">800</i></span></div>
<div style="left:1432px;top:736px;width:125px;height:38px;overflow:hidden"><span class="nw" style="left:5px;top:10px;font-size:16px;line-height:20px;color:#393939"><i style="font-size:17.00px">A</i></span></div>
<svg style="left:273px;top:784px" width="14" height="14" viewBox="0 0 14 14"><defs><linearGradient id="g" x1="0" y1="0" x2="0" y2="1"><stop offset="0" stop-color="#f4f4f4"/><stop offset="1" stop-color="#d8d8d8"/></linearGradient></defs><rect x="0.5" y="0.5" width="12.5" height="12.5" rx="2.5" fill="url(#g)" stroke="#9a9a9a" stroke-width="1"/></svg>
<div style="left:298px;top:775px;width:125px;height:38px;overflow:hidden"><span class="nw" style="left:5px;top:10px;font-size:16px;line-height:20px;color:#393939">仓库</span></div>
<div style="left:550px;top:775px;width:125px;height:38px;overflow:hidden"><span class="nw" style="left:5px;top:10px;font-size:16px;line-height:20px;color:#393939"><i style="font-size:17.00px">2013022800004</i></span></div>
<div style="left:676px;top:775px;width:125px;height:38px;overflow:hidden"><span class="nw" style="left:5px;top:10px;font-size:16px;line-height:20px;color:#393939">发电机</span></div>
<div style="left:802px;top:775px;width:125px;height:38px;overflow:hidden"><span class="nw" style="left:5px;top:10px;font-size:16px;line-height:20px;color:#393939">通用</span></div>
<div style="left:928px;top:775px;width:125px;height:38px;overflow:hidden"><span class="nw" style="left:5px;top:10px;font-size:16px;line-height:20px;color:#393939"><i style="font-size:17.00px">1</i></span></div>
<div style="left:1054px;top:775px;width:125px;height:38px;overflow:hidden"><span class="nw" style="left:5px;top:10px;font-size:16px;line-height:20px;color:#393939"><i style="font-size:17.00px">550</i></span></div>
<div style="left:1180px;top:775px;width:125px;height:38px;overflow:hidden"><span class="nw" style="left:5px;top:10px;font-size:16px;line-height:20px;color:#393939"><i style="font-size:17.00px">0</i></span></div>
<div style="left:1306px;top:775px;width:125px;height:38px;overflow:hidden"><span class="nw" style="left:5px;top:10px;font-size:16px;line-height:20px;color:#393939"><i style="font-size:17.00px">550</i></span></div>
<div style="left:1432px;top:775px;width:125px;height:38px;overflow:hidden"><span class="nw" style="left:5px;top:10px;font-size:16px;line-height:20px;color:#393939">仓库</span></div>
<svg style="left:273px;top:823px" width="14" height="14" viewBox="0 0 14 14"><defs><linearGradient id="g" x1="0" y1="0" x2="0" y2="1"><stop offset="0" stop-color="#f4f4f4"/><stop offset="1" stop-color="#d8d8d8"/></linearGradient></defs><rect x="0.5" y="0.5" width="12.5" height="12.5" rx="2.5" fill="url(#g)" stroke="#9a9a9a" stroke-width="1"/></svg>
<div style="left:298px;top:814px;width:125px;height:38px;overflow:hidden"><span class="nw" style="left:5px;top:10px;font-size:16px;line-height:20px;color:#393939">仓库</span></div>
<div style="left:550px;top:814px;width:125px;height:38px;overflow:hidden"><span class="nw" style="left:5px;top:10px;font-size:16px;line-height:20px;color:#393939"><i style="font-size:17.00px">2013022800000</i></span></div>
<div style="left:676px;top:814px;width:125px;height:38px;overflow:hidden"><span class="nw" style="left:5px;top:10px;font-size:16px;line-height:20px;color:#393939"><i style="font-size:17.00px">H3</i>灯泡</span></div>
<div style="left:802px;top:814px;width:125px;height:38px;overflow:hidden"><span class="nw" style="left:5px;top:10px;font-size:16px;line-height:20px;color:#393939">杠灯<i style="font-size:17.00px">/</i>大灯灯泡</span></div>
<div style="left:928px;top:814px;width:125px;height:38px;overflow:hidden"><span class="nw" style="left:5px;top:10px;font-size:16px;line-height:20px;color:#393939"><i style="font-size:17.00px">1</i></span></div>
<div style="left:1054px;top:814px;width:125px;height:38px;overflow:hidden"><span class="nw" style="left:5px;top:10px;font-size:16px;line-height:20px;color:#393939"><i style="font-size:17.00px">3.5</i></span></div>
<div style="left:1180px;top:814px;width:125px;height:38px;overflow:hidden"><span class="nw" style="left:5px;top:10px;font-size:16px;line-height:20px;color:#393939"><i style="font-size:17.00px">0</i></span></div>
<div style="left:1306px;top:814px;width:125px;height:38px;overflow:hidden"><span class="nw" style="left:5px;top:10px;font-size:16px;line-height:20px;color:#393939"><i style="font-size:17.00px">3.5</i></span></div>
<div style="left:1432px;top:814px;width:125px;height:38px;overflow:hidden"><span class="nw" style="left:5px;top:10px;font-size:16px;line-height:20px;color:#393939">仓库</span></div>
<svg style="left:273px;top:862px" width="14" height="14" viewBox="0 0 14 14"><defs><linearGradient id="g" x1="0" y1="0" x2="0" y2="1"><stop offset="0" stop-color="#f4f4f4"/><stop offset="1" stop-color="#d8d8d8"/></linearGradient></defs><rect x="0.5" y="0.5" width="12.5" height="12.5" rx="2.5" fill="url(#g)" stroke="#9a9a9a" stroke-width="1"/></svg>
<div style="left:298px;top:853px;width:125px;height:38px;overflow:hidden"><span class="nw" style="left:5px;top:10px;font-size:16px;line-height:20px;color:#393939">仓库</span></div>
<div style="left:550px;top:853px;width:125px;height:38px;overflow:hidden"><span class="nw" style="left:5px;top:10px;font-size:16px;line-height:20px;color:#393939"><i style="font-size:17.00px">2013022800003</i></span></div>
<div style="left:676px;top:853px;width:125px;height:38px;overflow:hidden"><span class="nw" style="left:5px;top:10px;font-size:16px;line-height:20px;color:#393939">小灯灯泡</span></div>
<div style="left:802px;top:853px;width:125px;height:38px;overflow:hidden"><span class="nw" style="left:5px;top:10px;font-size:16px;line-height:20px;color:#393939">刹车灯<i style="font-size:17.00px">/</i>转弯灯</span></div>
<div style="left:928px;top:853px;width:125px;height:38px;overflow:hidden"><span class="nw" style="left:5px;top:10px;font-size:16px;line-height:20px;color:#393939"><i style="font-size:17.00px">1</i></span></div>
<div style="left:1054px;top:853px;width:125px;height:38px;overflow:hidden"><span class="nw" style="left:5px;top:10px;font-size:16px;line-height:20px;color:#393939"><i style="font-size:17.00px">0</i></span></div>
<div style="left:1180px;top:853px;width:125px;height:38px;overflow:hidden"><span class="nw" style="left:5px;top:10px;font-size:16px;line-height:20px;color:#393939"><i style="font-size:17.00px">0</i></span></div>
<div style="left:1306px;top:853px;width:125px;height:38px;overflow:hidden"><span class="nw" style="left:5px;top:10px;font-size:16px;line-height:20px;color:#393939"><i style="font-size:17.00px">0</i></span></div>
<div style="left:1432px;top:853px;width:125px;height:38px;overflow:hidden"><span class="nw" style="left:5px;top:10px;font-size:16px;line-height:20px;color:#393939">仓库</span></div>
<svg style="left:273px;top:901px" width="14" height="14" viewBox="0 0 14 14"><defs><linearGradient id="g" x1="0" y1="0" x2="0" y2="1"><stop offset="0" stop-color="#f4f4f4"/><stop offset="1" stop-color="#d8d8d8"/></linearGradient></defs><rect x="0.5" y="0.5" width="12.5" height="12.5" rx="2.5" fill="url(#g)" stroke="#9a9a9a" stroke-width="1"/></svg>
</body></html>
